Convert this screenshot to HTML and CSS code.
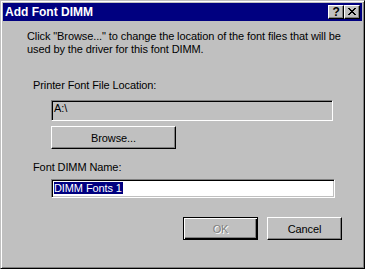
FILE: index.html
```html
<!DOCTYPE html>
<html lang="en">
<head>
    <meta charset="UTF-8">
    <title>Add Font DIMM</title>
    <link rel="stylesheet" href="styles.css">
</head>
<body>
    <div class="window">
        <div class="titlebar">
            <span class="title">Add Font DIMM</span>
            <div class="caption-buttons">
                <div class="cap-btn help">?</div>
                <div class="cap-btn close">
                    <svg width="8" height="7" viewBox="0 0 8 7" shape-rendering="crispEdges">
                        <path d="M0 0h2v1H0zM6 0h2v1H6zM1 1h2v1H1zM5 1h2v1H5zM2 2h4v1H2zM3 3h2v1H3zM2 4h4v1H2zM1 5h2v1H1zM5 5h2v1H5zM0 6h2v1H0zM6 6h2v1H6z" fill="#000"/>
                    </svg>
                </div>
            </div>
        </div>

        <div class="content">
            <p class="intro">Click "Browse..." to change the location of the font files that will be<br>used by the driver for this font DIMM.</p>

            <div class="label first">Printer Font File Location:</div>
            <div class="field readonly">A:\</div>
            <button class="btn browse">Browse...</button>

            <div class="label second">Font DIMM Name:</div>
            <div class="field name"><span class="sel">DIMM Fonts 1</span></div>

            <div class="actions">
                <button class="btn default" disabled>OK</button>
                <button class="btn">Cancel</button>
            </div>
        </div>
    </div>
</body>
</html>
```

FILE: styles.css
```css
body {
    margin: 0;
    background-color: #c0c0c0;
    font-family: "Liberation Sans", Arial, sans-serif;
    font-size: 11px;
    line-height: 13px;
    letter-spacing: -0.1px;
    color: #000;
}
.window {
    box-sizing: border-box;
    width: 365px;
    height: 269px;
    padding: 2px;
    background-color: #c0c0c0;
    border: 1px solid;
    border-color: #c0c0c0 #000 #000 #c0c0c0;
    box-shadow: inset 1px 1px #fff, inset -1px -1px #808080;
}
.titlebar {
    display: flex;
    align-items: center;
    height: 18px;
    padding-left: 2px;
    padding-right: 2px;
    background-color: #000080;
    color: #fff;
}
.title {
    font-weight: bold;
    font-size: 12px;
    line-height: 18px;
    letter-spacing: 0;
}
.caption-buttons {
    display: flex;
    margin-left: auto;
}
.cap-btn {
    box-sizing: border-box;
    display: flex;
    align-items: center;
    justify-content: center;
    width: 16px;
    height: 14px;
    background-color: #c0c0c0;
    border: 1px solid;
    border-color: #fff #000 #000 #fff;
    box-shadow: inset -1px -1px #808080;
    color: #000;
}
.help {
    font-weight: bold;
    font-size: 12px;
    line-height: 12px;
    padding-bottom: 1px;
}
.close svg {
    display: block;
    margin-bottom: 1px;
}
.content {
    padding-top: 9px;
}
.intro {
    margin: 0 0 0 24px;
}
.label {
    margin-left: 30px;
}
.label.first {
    margin-top: 23px;
}
.label.second {
    margin-top: 12px;
}
.field {
    box-sizing: border-box;
    margin-left: 48px;
    border: 1px solid;
    border-color: #808080 #fff #fff #808080;
    box-shadow: inset 1px 1px #000, inset -1px -1px #c0c0c0;
    padding: 1px 0 0 2px;
    white-space: nowrap;
}
.field.readonly {
    width: 282px;
    height: 21px;
    margin-top: 8px;
    padding-top: 1px;
    background-color: #c0c0c0;
}
.field.name {
    width: 284px;
    height: 19px;
    margin-top: 5px;
    padding-top: 2px;
    background-color: #fff;
}
.sel {
    background-color: #000080;
    color: #fff;
    padding: 0 1px 0 0;
}
.btn {
    box-sizing: border-box;
    display: block;
    width: 75px;
    height: 23px;
    padding: 0;
    background-color: #c0c0c0;
    border: 1px solid;
    border-color: #fff #000 #000 #fff;
    box-shadow: inset -1px -1px #808080;
    font-family: inherit;
    font-size: 11px;
    letter-spacing: inherit;
    color: #000;
}
.btn.browse {
    width: 125px;
    margin: 5px 0 0 48px;
}
.btn.default {
    border-color: #000;
    box-shadow: inset 1px 1px #fff, inset -1px -1px #000, inset -2px -2px #808080;
}
.btn:disabled {
    color: #808080;
    text-shadow: 1px 1px #fff;
}
.actions {
    display: flex;
    justify-content: flex-end;
    gap: 9px;
    margin-top: 19px;
    padding-right: 20px;
}
```
